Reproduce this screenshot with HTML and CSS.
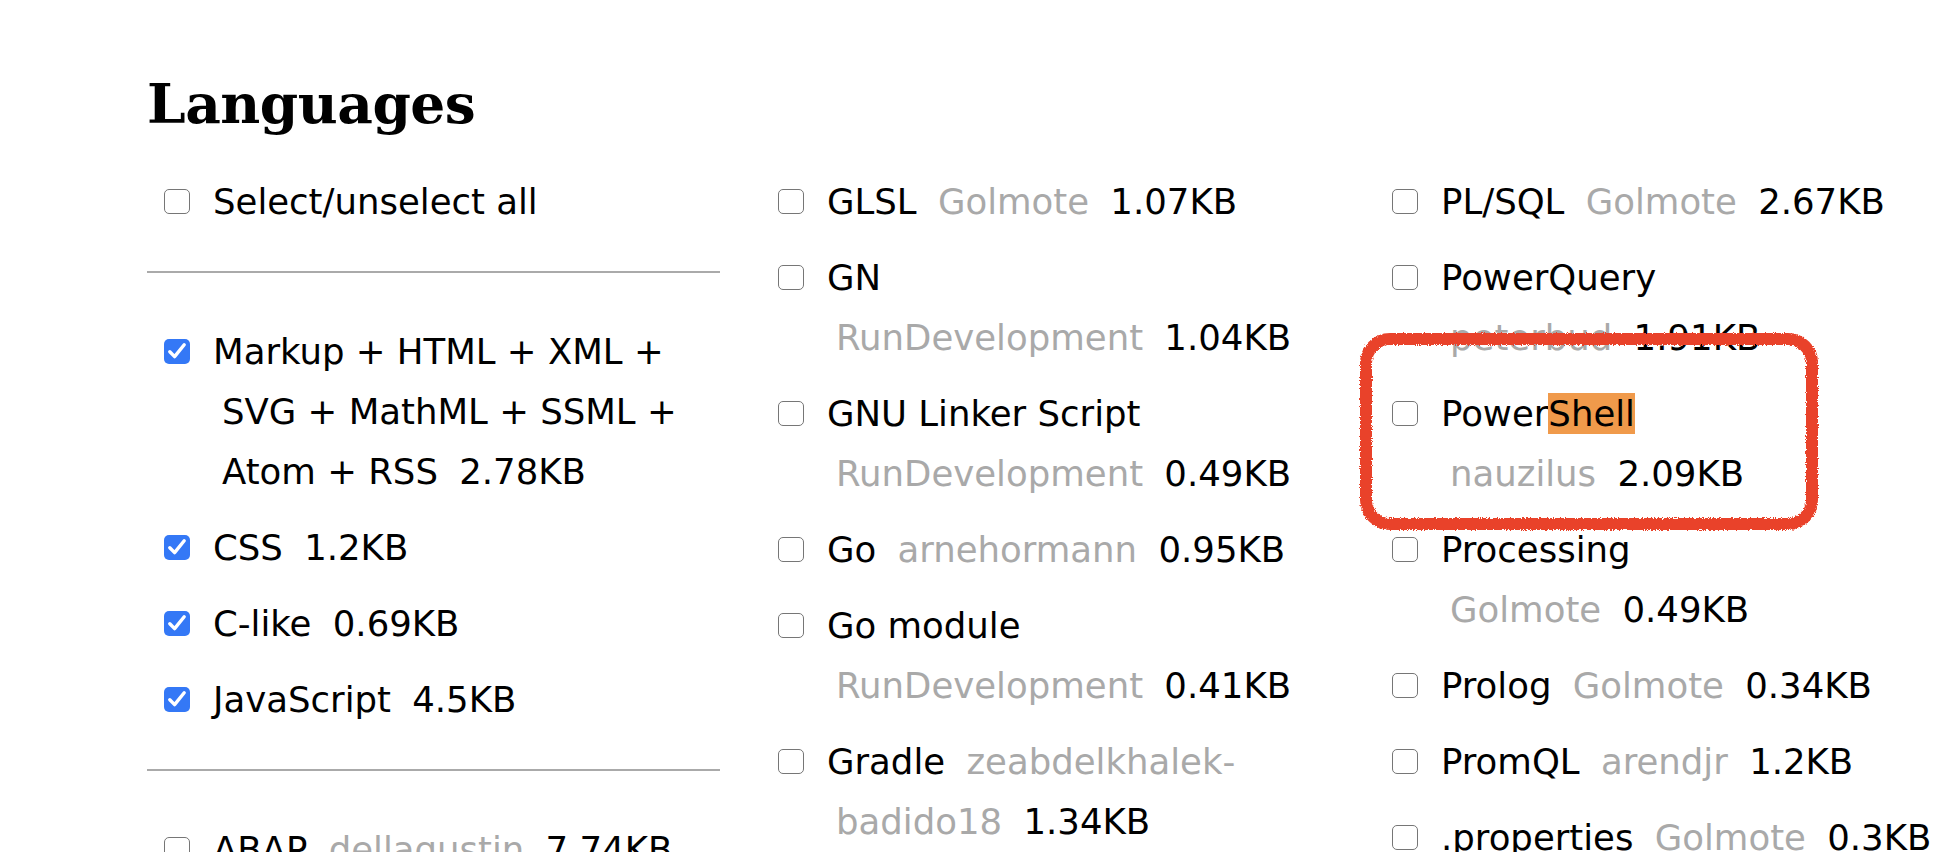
FILE: index.html
```html
<!DOCTYPE html>
<html lang="en">
<head>
<meta charset="utf-8">
<title>Languages</title>
<link rel="stylesheet" href="styles.css">
</head>
<body>
<svg class="defs" width="0" height="0" aria-hidden="true">
  <filter id="rough" x="-5%" y="-5%" width="110%" height="110%">
    <feTurbulence type="fractalNoise" baseFrequency="0.9" numOctaves="2" seed="3" result="noise"/>
    <feDisplacementMap in="SourceGraphic" in2="noise" scale="4" xChannelSelector="R" yChannelSelector="G"/>
  </filter>
</svg>
<main class="page">
  <h1 class="title">Languages</h1>
  <div class="options">
    <div class="col">
      <label class="opt"><span class="cb"></span><span class="name">Select/unselect all</span></label>
      <hr class="sep">
      <label class="opt"><span class="cb on"><svg viewBox="0 0 26 25"><polyline points="5.8,12.8 10.6,17.6 20.2,5.8"/></svg></span><span class="name">Markup + HTML + XML + SVG + MathML + SSML + Atom + RSS</span> <span class="size">2.78KB</span></label>
      <label class="opt"><span class="cb on"><svg viewBox="0 0 26 25"><polyline points="5.8,12.8 10.6,17.6 20.2,5.8"/></svg></span><span class="name">CSS</span> <span class="size">1.2KB</span></label>
      <label class="opt"><span class="cb on"><svg viewBox="0 0 26 25"><polyline points="5.8,12.8 10.6,17.6 20.2,5.8"/></svg></span><span class="name">C-like</span> <span class="size">0.69KB</span></label>
      <label class="opt"><span class="cb on"><svg viewBox="0 0 26 25"><polyline points="5.8,12.8 10.6,17.6 20.2,5.8"/></svg></span><span class="name">JavaScript</span> <span class="size">4.5KB</span></label>
      <hr class="sep">
      <label class="opt"><span class="cb"></span><span class="name">ABAP</span> <span class="owner">dellagustin</span>&nbsp;<span class="size">7.74KB</span></label>
    </div>
    <div class="col">
      <label class="opt"><span class="cb"></span><span class="name">GLSL</span> <span class="owner">Golmote</span>&nbsp;<span class="size">1.07KB</span></label>
      <label class="opt"><span class="cb"></span><span class="name">GN</span> <span class="owner">RunDevelopment</span>&nbsp;<span class="size">1.04KB</span></label>
      <label class="opt"><span class="cb"></span><span class="name">GNU Linker Script</span> <span class="owner">RunDevelopment</span>&nbsp;<span class="size">0.49KB</span></label>
      <label class="opt"><span class="cb"></span><span class="name">Go</span> <span class="owner">arnehormann</span>&nbsp;<span class="size">0.95KB</span></label>
      <label class="opt"><span class="cb"></span><span class="name">Go module</span> <span class="owner">RunDevelopment</span>&nbsp;<span class="size">0.41KB</span></label>
      <label class="opt"><span class="cb"></span><span class="name">Gradle</span> <span class="owner">zeabdelkhalek-badido18</span>&nbsp;<span class="size">1.34KB</span></label>
    </div>
    <div class="col">
      <label class="opt"><span class="cb"></span><span class="name">PL/SQL</span> <span class="owner">Golmote</span>&nbsp;<span class="size">2.67KB</span></label>
      <label class="opt"><span class="cb"></span><span class="name">PowerQuery</span> <span class="owner">peterbud</span>&nbsp;<span class="size">1.91KB</span></label>
      <label class="opt"><span class="cb"></span><span class="name">Power<span class="hl">Shell</span></span> <span class="owner">nauzilus</span>&nbsp;<span class="size">2.09KB</span></label>
      <label class="opt"><span class="cb"></span><span class="name">Processing</span> <span class="owner">Golmote</span>&nbsp;<span class="size">0.49KB</span></label>
      <label class="opt"><span class="cb"></span><span class="name">Prolog</span> <span class="owner">Golmote</span>&nbsp;<span class="size">0.34KB</span></label>
      <label class="opt"><span class="cb"></span><span class="name">PromQL</span> <span class="owner">arendjr</span>&nbsp;<span class="size">1.2KB</span></label>
      <label class="opt"><span class="cb"></span><span class="name">.properties</span> <span class="owner">Golmote</span>&nbsp;<span class="size">0.3KB</span></label>
    </div>
  </div>
  <div class="annotation"></div>
</main>
</body>
</html>
```

FILE: styles.css
```css
html {
  overflow: hidden;
  background: #fff;
}

body {
  margin: 0;
  color: #000;
  font-family: "DejaVu Sans", "Noto Sans", sans-serif;
}

.defs {
  position: absolute;
  width: 0;
  height: 0;
}

.page {
  position: relative;
  padding: 76px 0 0 147px;
}

.title {
  margin: 0 0 33px;
  font-family: "DejaVu Serif", "Liberation Serif", serif;
  font-weight: 700;
  font-size: 55px;
  line-height: 55px;
  letter-spacing: -0.5px;
}

.options {
  display: grid;
  grid-template-columns: repeat(3, 573px);
  column-gap: 41px;
  align-items: start;
}

.col {
  display: flex;
  flex-direction: column;
}

.opt {
  display: block;
  padding: 8px 0 8px 75px;
  text-indent: -75px;
  font-size: 35.5px;
  line-height: 60px;
}

.cb {
  display: inline-block;
  box-sizing: border-box;
  width: 26px;
  height: 25px;
  margin: 0 23px 0 17px;
  border: 1.6px solid #767676;
  border-radius: 5px;
  text-indent: 0;
  vertical-align: baseline;
  background: #fff;
}

.cb.on {
  border: none;
  background: #3478f6;
}

.cb svg {
  display: block;
  width: 26px;
  height: 25px;
}

.cb polyline {
  fill: none;
  stroke: #fff;
  stroke-width: 3.4;
  stroke-linecap: round;
  stroke-linejoin: round;
}

.name,
.owner {
  margin-right: 10px;
}

.owner {
  color: #a9a9a9;
}

.hl {
  background: #f09a4b;
  margin: 0;
}

.sep {
  height: 2px;
  margin: 31px 0 41px;
  border: 0;
  background: #aaaaaa;
}

.annotation {
  position: absolute;
  left: 1360px;
  top: 333px;
  width: 458px;
  height: 197px;
  box-sizing: border-box;
  border: 12px solid #e9432a;
  border-radius: 30px;
  filter: url(#rough);
  pointer-events: none;
}
```
